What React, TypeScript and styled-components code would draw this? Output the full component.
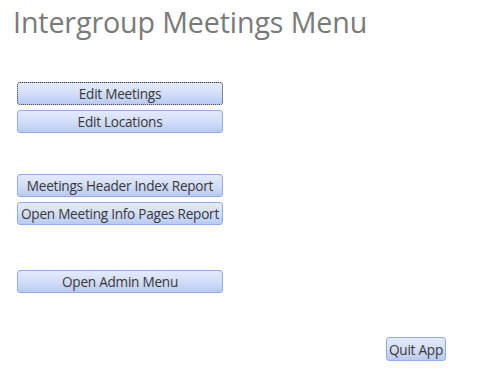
import React from 'react';
import styled, { createGlobalStyle } from 'styled-components';

const GlobalStyle = createGlobalStyle`
  html, body {
    margin: 0;
    padding: 0;
    background: #ffffff;
  }
  body {
    font-family: 'Open Sans', 'Liberation Sans', sans-serif;
  }
`;

const Page = styled.div`
  width: 488px;
  height: 387px;
  box-sizing: border-box;
  padding: 3px 0 0 17px;
  display: flex;
  flex-direction: column;
`;

const Title = styled.h1`
  margin: 0 0 0 -4px;
  font-family: 'Open Sans', 'Liberation Sans', sans-serif;
  font-weight: 400;
  font-size: 28.6px;
  line-height: 37px;
  color: #7a7a7a;
  letter-spacing: -0.1px;
`;

const ButtonGroup = styled.div<{ $top: number }>`
  display: flex;
  flex-direction: column;
  gap: 5px;
  margin-top: ${(p) => p.$top}px;
  width: 206px;
`;

const MenuButton = styled.button<{ $focused?: boolean }>`
  position: relative;
  height: 23px;
  width: 100%;
  padding: 0;
  box-sizing: border-box;
  border: 1px solid #93abe8;
  border-radius: 3px;
  background: linear-gradient(to bottom, #e5ebfc 0%, #d3def9 50%, #b9caf4 100%);
  font-family: 'Open Sans', 'Liberation Sans', sans-serif;
  font-size: 13.6px;
  line-height: 21px;
  letter-spacing: -0.25px;
  color: #383838;
  cursor: pointer;
  white-space: nowrap;
  outline: none;

  ${(p) =>
    p.$focused &&
    `
    border: 1px dotted #2b2b2b;
  `}
`;

const Footer = styled.div`
  display: flex;
  justify-content: flex-end;
  margin-top: 44px;
  padding-right: 42px;
`;

const QuitButton = styled(MenuButton)`
  width: 60px;
  height: 24px;
`;

export default function App() {
  return (
    <>
      <GlobalStyle />
      <Page>
        <Title>Intergroup Meetings Menu</Title>
        <ButtonGroup $top={42}>
          <MenuButton $focused>Edit Meetings</MenuButton>
          <MenuButton>Edit Locations</MenuButton>
        </ButtonGroup>
        <ButtonGroup $top={41}>
          <MenuButton>Meetings Header Index Report</MenuButton>
          <MenuButton>Open Meeting Info Pages Report</MenuButton>
        </ButtonGroup>
        <ButtonGroup $top={45}>
          <MenuButton>Open Admin Menu</MenuButton>
        </ButtonGroup>
        <Footer>
          <QuitButton>Quit App</QuitButton>
        </Footer>
      </Page>
    </>
  );
}
